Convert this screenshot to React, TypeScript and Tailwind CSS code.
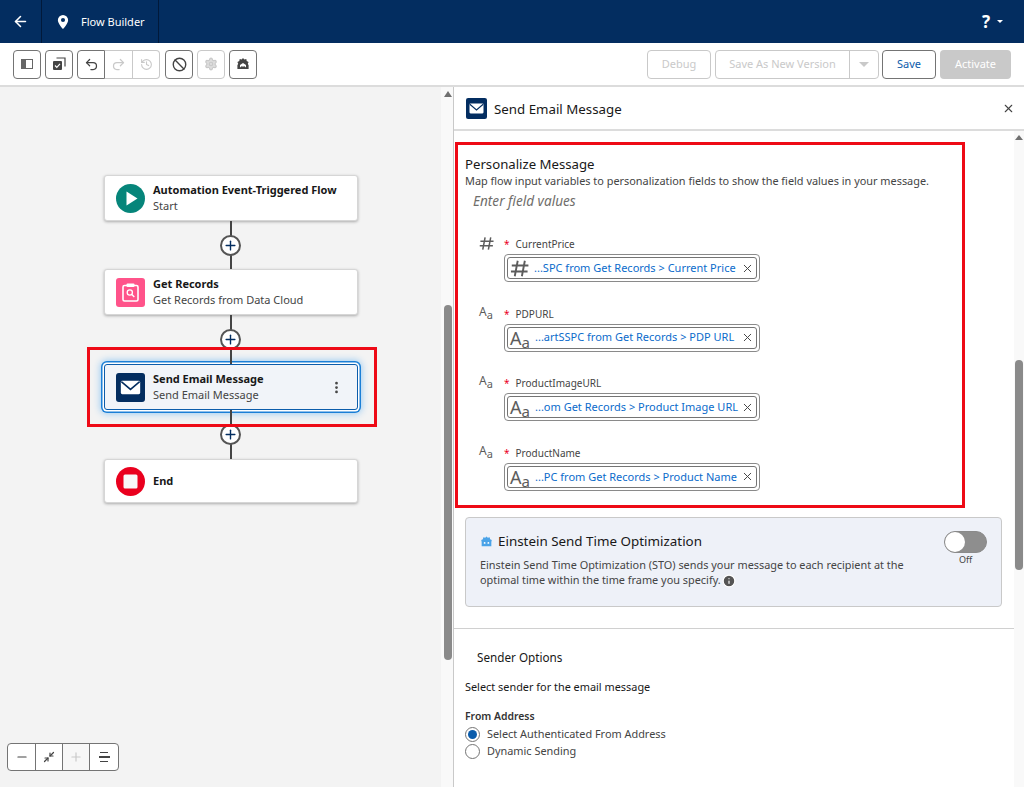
import { useState } from "react";
import { ArrowLeft, Ban, History, Minimize2, Minus, MoreVertical, Plus, Redo2, Settings, Undo2, X, Info } from "lucide-react";

const font = "font-['Noto_Sans','Open_Sans',sans-serif]";

function MailIcon({ className }: { className: string }) {
  return (
    <svg viewBox="0 0 30 30" className={className}>
      <rect width="30" height="30" rx="3" fill="#032d60" />
      <rect x="5" y="8" width="20" height="14" rx="1.5" fill="#fff" />
      <path d="M5.5 9 L15 17 L24.5 9" fill="none" stroke="#032d60" strokeWidth="1.6" />
    </svg>
  );
}

function HashIcon({ className }: { className: string }) {
  return (
    <svg viewBox="0 0 16 16" className={className} fill="none" stroke="#5c5c5c" strokeWidth="1.6">
      <path d="M6.5 1.5 4 14.5M12.5 1.5l-2.5 13M1.5 5.5h14M.8 10.5h14" />
    </svg>
  );
}

function TextIcon({ big }: { big?: boolean }) {
  return (
    <span className={`flex items-end leading-none text-[#5c5c5c] ${big ? "w-[21px]" : "w-[15px]"}`}>
      <span className={big ? "text-[18px]" : "text-[12px]"}>A</span>
      <span className={`${big ? "text-[15px] translate-y-[3px]" : "text-[11px] translate-y-[2px]"}`}>a</span>
    </span>
  );
}

function FlowNode({ title, sub, icon, selected }: { title: string; sub?: string; icon: React.ReactNode; selected?: boolean }) {
  return (
    <div
      className={`flex w-[254px] items-center rounded-[3px] border pl-[11px] ${
        selected
          ? "border-[#0b5cab] bg-[#f1f4f9] shadow-[0_0_0_1.5px_#fff,0_0_0_3px_#1b7fd6,0_0_7px_4px_#9fcdf2]"
          : "border-[#d6d6d6] bg-white shadow-[0_1px_3px_rgba(0,0,0,0.3)]"
      } ${sub ? "h-[46px]" : "h-[44px]"}`}
    >
      <div className="h-[29px] w-[29px] shrink-0">{icon}</div>
      <div className="ml-[8px] min-w-0 flex-1">
        <div className="text-[11px] leading-[16px] font-bold text-[#181818]">{title}</div>
        {sub ? <div className="text-[11px] leading-[16px] text-[#444444]">{sub}</div> : null}
      </div>
      {selected ? <MoreVertical className="mr-[13px] h-[15px] w-[15px] text-[#444444]" strokeWidth={2.4} /> : null}
    </div>
  );
}

function Connector({ height, plusTop }: { height: number; plusTop: number }) {
  return (
    <div className="relative w-[2px] bg-[#444444]" style={{ height }}>
      <div
        className="absolute left-[-10px] flex h-[21px] w-[21px] items-center justify-center rounded-full border-2 border-[#555555] bg-white"
        style={{ top: plusTop }}
      >
        <Plus className="h-[15px] w-[15px] text-[#032d60]" strokeWidth={2.2} />
      </div>
    </div>
  );
}

function ToolBtn({ children, disabled, className = "" }: { children: React.ReactNode; disabled?: boolean; className?: string }) {
  return (
    <div className={`flex h-[29px] items-center justify-center border bg-white ${disabled ? "border-[#c9c9c9] text-[#c9c9c9]" : "border-[#747474] text-[#444444]"} ${className}`}>
      {children}
    </div>
  );
}

function Field({ label, value, icon, bigIcon, valuePad }: { label: string; value: string; icon: React.ReactNode; bigIcon: React.ReactNode; valuePad: string }) {
  return (
    <div className="flex">
      <div className="flex h-[20px] w-[39px] items-start pl-[14px]">{icon}</div>
      <div>
        <div className="text-[10px] leading-[16px] text-[#444444]">
          <span className="mr-[6px] text-[#ea001e]">*</span>
          {label}
        </div>
        <div className="mt-[2px] h-[28px] w-[256px] rounded-[4px] border border-[#8a8a8a] bg-white p-[2px]">
          <div className="flex h-full items-center rounded-[3px] border border-[#747474] pl-[2px] pr-[2px]">
            <div className="w-[18px] shrink-0">{bigIcon}</div>
            <span className={`flex-1 overflow-visible whitespace-nowrap text-[11px] text-[#0b6bcb] ${valuePad}`}>{value}</span>
            <X className="h-[13px] w-[13px] shrink-0 text-[#444444]" strokeWidth={1.8} />
          </div>
        </div>
      </div>
    </div>
  );
}

export default function App() {
  const [sendTime] = useState(false);

  return (
    <div className={`flex h-[787px] w-[1024px] flex-col overflow-hidden bg-white ${font}`}>
      <header className="flex h-[43px] shrink-0 items-center bg-[#032d60] text-white">
        <div className="flex h-full w-[42px] items-center justify-center border-r border-[#01193a]">
          <ArrowLeft className="h-[17px] w-[17px]" strokeWidth={2.2} />
        </div>
        <div className="flex h-full w-[117px] items-center border-r border-[#01193a] pl-[15px]">
          <svg viewBox="0 0 12 15" className="h-[14px] w-[12px]">
            <path fillRule="evenodd" d="M6 0a5.5 5.5 0 0 0-5.5 5.5C.5 9 6 15 6 15s5.500-6 5.500-9.500A5.500 5.500 0 0 0 6 0Zm0 7.600a2.200 2.200 0 1 1 0-4.400 2.200 2.200 0 0 1 0 4.400Z" fill="#fff" />
          </svg>
          <span className="ml-[12px] mt-[1px] text-[11px]">Flow Builder</span>
        </div>
        <div className="ml-auto mr-[21px] flex items-center gap-[7px]">
          <span className="text-[17px] font-bold">?</span>
          <span className="h-0 w-0 border-x-[3px] border-t-[3px] border-x-transparent border-t-white" />
        </div>
      </header>

      <div className="flex h-[44px] shrink-0 items-center border-b-2 border-[#dcdcdc] pl-[13px] pr-[13px]">
        <div className="flex items-center gap-[4px]">
          <ToolBtn className="w-[28px] rounded-[4px]">
            <svg viewBox="0 0 12 10" className="h-[10px] w-[12px]">
              <rect x=".5" y=".5" width="11" height="9" fill="none" stroke="#666" />
              <rect x=".5" y=".5" width="4.500" height="9" fill="#666" />
            </svg>
          </ToolBtn>
          <ToolBtn className="w-[28px] rounded-[4px]">
            <svg viewBox="0 0 14 14" className="h-[14px] w-[14px]">
              <path d="M4.500 1h8.500v8.500" fill="none" stroke="#444" strokeWidth="1.200" />
              <rect x="1" y="4" width="9" height="9" rx="1" fill="#444" />
              <path d="M3 8.500l1.800 1.800L8 6.800" fill="none" stroke="#fff" strokeWidth="1.200" />
            </svg>
          </ToolBtn>
          <div className="flex">
            <ToolBtn className="w-[28px] rounded-l-[4px]"><Undo2 className="h-[15px] w-[15px]" /></ToolBtn>
            <ToolBtn disabled className="w-[28px] border-l-0"><Redo2 className="h-[15px] w-[15px]" /></ToolBtn>
            <ToolBtn disabled className="w-[27px] rounded-r-[4px] border-l-0"><History className="h-[13px] w-[13px]" /></ToolBtn>
          </div>
          <ToolBtn className="ml-[1px] w-[28px] rounded-[4px]"><Ban className="h-[15px] w-[15px]" strokeWidth={2.2} /></ToolBtn>
          <ToolBtn disabled className="w-[28px] rounded-[4px]"><Settings className="h-[14px] w-[14px] fill-[#dddddd]" /></ToolBtn>
          <ToolBtn className="w-[28px] rounded-[4px]">
            <svg viewBox="0 0 14 14" className="h-[14px] w-[14px]">
              <path d="M7 1l1.300 1.600 2-.5.400 2 1.900.8-.8 1.900.8 1.500V12H1.400V8.300l.8-1.500-.8-1.900 1.900-.8.400-2 2 .5Z" fill="#444" />
              <path d="M4 10.500V8l3-2 3 2v2.500L8 9l-1 1-1-1Z" fill="#fff" />
            </svg>
          </ToolBtn>
        </div>
        <div className="ml-auto flex items-center text-[11px]">
          <div className="flex h-[29px] w-[64px] items-center justify-center rounded-[4px] border border-[#c9c9c9] text-[#c9c9c9]">Debug</div>
          <div className="ml-[4px] flex h-[29px] w-[164px] items-center rounded-[4px] border border-[#c9c9c9] text-[#c9c9c9]">
            <span className="flex-1 text-center">Save As New Version</span>
            <span className="flex h-full w-[29px] items-center justify-center border-l border-[#c9c9c9]">
              <span className="h-0 w-0 border-x-[5px] border-t-[5px] border-x-transparent border-t-[#c9c9c9]" />
            </span>
          </div>
          <div className="ml-[3px] flex h-[29px] w-[54px] items-center justify-center rounded-[4px] border border-[#747474] text-[#0b5cab]">Save</div>
          <div className="ml-[4px] flex h-[29px] w-[71px] items-center justify-center rounded-[4px] bg-[#c9c9c9] text-white">Activate</div>
        </div>
      </div>

      <div className="flex min-h-0 flex-1">
        <main className="relative flex w-[441px] shrink-0 flex-col bg-[#f3f3f3] pt-[88px] pl-[104px]">
          <FlowNode
            title="Automation Event-Triggered Flow"
            sub="Start"
            icon={
              <svg viewBox="0 0 29 29" className="h-full w-full">
                <circle cx="14.500" cy="14.500" r="14.500" fill="#06857a" />
                <path d="M10.500 7.500 21.500 14.500 10.500 21.500Z" fill="#fff" />
              </svg>
            }
          />
          <div className="ml-[126px]"><Connector height={48} plusTop={14} /></div>
          <FlowNode
            title="Get Records"
            sub="Get Records from Data Cloud"
            icon={
              <svg viewBox="0 0 29 29" className="h-full w-full">
                <rect width="29" height="29" rx="3" fill="#ff538a" />
                <rect x="7" y="7.500" width="15" height="15.500" rx="1.500" fill="none" stroke="#fff" strokeWidth="1.600" />
                <rect x="10.500" y="5.500" width="8" height="3.500" rx="1" fill="#fff" />
                <circle cx="13.800" cy="14.500" r="2.600" fill="none" stroke="#fff" strokeWidth="1.300" />
                <path d="M15.800 16.500 18.300 19" stroke="#fff" strokeWidth="1.400" />
              </svg>
            }
          />
          <div className="ml-[126px]"><Connector height={49} plusTop={14} /></div>
          <FlowNode title="Send Email Message" sub="Send Email Message" selected icon={<MailIcon className="h-full w-full" />} />
          <div className="ml-[126px]"><Connector height={49} plusTop={14} /></div>
          <FlowNode
            title="End"
            icon={
              <svg viewBox="0 0 29 29" className="h-full w-full">
                <circle cx="14.500" cy="14.500" r="14.500" fill="#ea001e" />
                <rect x="7.500" y="7.500" width="14" height="14" rx="1.500" fill="#f8f8f8" />
              </svg>
            }
          />
          {/* red callout drawn over the canvas */}
          <div className="absolute left-[87px] top-[260px] h-[80px] w-[290px] border-[3px] border-[#ee0a16]" />
          <div className="absolute bottom-[16px] left-[7px] flex h-[28px] w-[112px] overflow-hidden rounded-[4px] border border-[#747474] bg-white text-[#444444]">
            <div className="flex w-[28px] items-center justify-center border-r border-[#747474]"><Minus className="h-[14px] w-[14px]" /></div>
            <div className="flex w-[27px] items-center justify-center border-r border-[#747474]"><Minimize2 className="h-[12px] w-[12px]" strokeWidth={2.4} /></div>
            <div className="flex w-[27px] items-center justify-center border-r border-[#747474] bg-[#f7f7f7] text-[#c9c9c9]"><Plus className="h-[14px] w-[14px]" /></div>
            <div className="flex flex-1 flex-col items-center justify-center gap-[3px]">
              <span className="h-[1.5px] w-[8px] bg-[#444444]" />
              <span className="h-[1.5px] w-[11px] bg-[#444444]" />
              <span className="h-[1.5px] w-[8px] bg-[#444444]" />
            </div>
          </div>
        </main>

        <div className="relative w-[13px] shrink-0 border-r border-[#c9c9c9] bg-[#f9f9f9]">
          <div className="absolute left-[3px] top-[4px] h-0 w-0 border-x-[4px] border-b-[6px] border-x-transparent border-b-[#707070]" />
          <div className="absolute left-[3px] top-[218px] h-[355px] w-[8px] rounded-full bg-[#8a8a8a]" />
        </div>

        <aside className="flex min-w-0 flex-1 flex-col">
          <div className="flex h-[44px] shrink-0 items-center border-b-2 border-[#dcdcdc] pl-[12px] pr-[9px]">
            <MailIcon className="h-[21px] w-[21px]" />
            <span className="ml-[7px] mt-[3px] text-[13.3px] text-[#181818]">Send Email Message</span>
            <X className="ml-auto h-[13px] w-[13px] text-[#444444]" strokeWidth={2} />
          </div>

          <div className="flex min-h-0 flex-1">
            <div className="relative min-w-0 flex-1 overflow-hidden">
              <div className="h-[385px] pl-[11px] pt-[24px]">
                <div className="text-[13.2px] leading-[18px] text-[#181818]">Personalize Message</div>
                <div className="text-[10.9px] leading-[16px] text-[#444444]">Map flow input variables to personalization fields to show the field values in your message.</div>
                <div className="mt-[2px] pl-[8px] text-[13.6px] leading-[20px] italic text-[#706e6b]">Enter field values</div>
                <div className="mt-[25px] flex flex-col gap-[23.6px]">
                  <Field label="CurrentPrice" value="...SPC from Get Records > Current Price" icon={<HashIcon className="h-[15px] w-[15px]" />} bigIcon={<HashIcon className="h-[19px] w-[19px]" />} valuePad="pl-[6px]" />
                  <Field label="PDPURL" value="...artSSPC from Get Records > PDP URL" icon={<TextIcon />} bigIcon={<TextIcon big />} valuePad="pl-[7px]" />
                  <Field label="ProductImageURL" value="...om Get Records > Product Image URL" icon={<TextIcon />} bigIcon={<TextIcon big />} valuePad="pl-[7px]" />
                  <Field label="ProductName" value="...PC from Get Records > Product Name" icon={<TextIcon />} bigIcon={<TextIcon big />} valuePad="pl-[7px]" />
                </div>
              </div>

              <div className="ml-[11px] mt-[1px] flex h-[90px] w-[537px] rounded-[4px] border border-[#c9c9c9] bg-[#eef1f8] pl-[14px] pt-[13px]">
                <div className="min-w-0 flex-1">
                  <div className="flex items-center text-[13.4px] leading-[20px] text-[#181818]">
                    <svg viewBox="0 0 14 14" className="mr-[5px] h-[13px] w-[13px]">
                      <path d="M7 1.500l1.400 1.500 2-.5.5 2 1.800 1-.5 2V12H1.800V7.500l-.5-2 1.800-1 .5-2 2 .5Z" fill="#4aa3e8" />
                      <circle cx="5" cy="8.500" r="1" fill="#fff" />
                      <circle cx="9" cy="8.500" r="1" fill="#fff" />
                    </svg>
                    Einstein Send Time Optimization
                  </div>
                  <div className="mt-[6px] w-[440px] text-[10.9px] leading-[15px] text-[#444444]">
                    Einstein Send Time Optimization (STO) sends your message to each recipient at the optimal time within the time frame you specify.
                    <Info className="ml-[1px] inline h-[14px] w-[14px] fill-[#555555] text-white" />
                  </div>
                </div>
                <div className="mr-[14px] flex w-[43px] flex-col items-center">
                  <div className={`flex h-[22px] w-[43px] items-center rounded-full border border-[#8a8a8a] ${sendTime ? "justify-end" : ""} bg-[#8e8e8e]`}>
                    <span className="h-[20px] w-[20px] rounded-full bg-white" />
                  </div>
                  <span className="mt-[1px] text-[9px] leading-[12px] text-[#444444]">Off</span>
                </div>
              </div>

              <div className="mt-[21px] border-t border-[#d0d0d0] pl-[11px]">
                <div className="pl-[12px] pt-[20px] text-[11.7px] leading-[16px] text-[#181818]">Sender Options</div>
                <div className="mt-[14px] text-[10.9px] leading-[16px] text-[#181818]">Select sender for the email message</div>
                <div className="mt-[13px] text-[10.4px] leading-[16px] font-semibold text-[#333333]">From Address</div>
                <label className="mt-[2px] flex h-[17px] items-center text-[10.9px] text-[#444444]">
                  <span className="mr-[7px] flex h-[15px] w-[15px] items-center justify-center rounded-full border border-[#747474]">
                    <span className="h-[9px] w-[9px] rounded-full bg-[#0b5cab]" />
                  </span>
                  Select Authenticated From Address
                </label>
                <label className="flex h-[17px] items-center text-[10.9px] text-[#444444]">
                  <span className="mr-[7px] h-[15px] w-[15px] rounded-full border border-[#747474]" />
                  Dynamic Sending
                </label>
              </div>

              {/* red callout over the personalize block */}
              <div className="absolute left-[1px] top-[11px] h-[366px] w-[510px] border-[3px] border-[#ee0a16]" />
            </div>
            <div className="relative w-[10px] shrink-0 bg-[#f9f9f9]">
              <div className="absolute left-[1px] top-[4px] h-0 w-0 border-x-[4px] border-b-[5px] border-x-transparent border-b-[#707070]" />
              <div className="absolute left-[1px] top-[229px] h-[210px] w-[8px] rounded-full bg-[#8a8a8a]" />
            </div>
          </div>
        </aside>
      </div>
    </div>
  );
}
